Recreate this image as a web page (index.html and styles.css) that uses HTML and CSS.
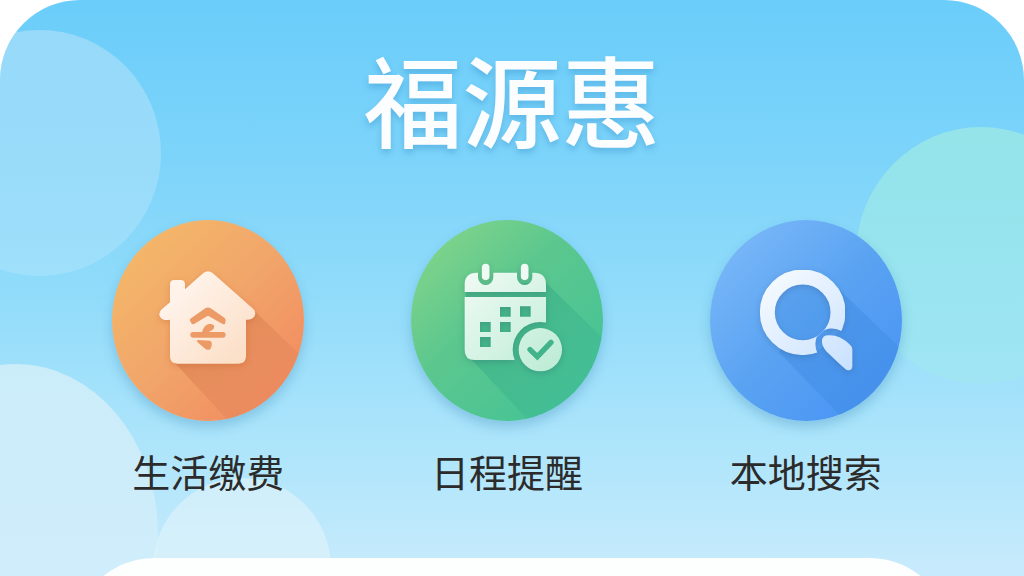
FILE: index.html
```html
<!DOCTYPE html>
<html lang="zh-CN">
<head>
    <meta charset="UTF-8">
    <meta name="viewport" content="width=device-width, initial-scale=1.0">
    <title>福源惠</title>
    <link rel="stylesheet" href="styles.css">
</head>
<body>
    <main class="hero">
        <div class="bubble bubble-top"></div>
        <div class="bubble bubble-green"></div>
        <div class="bubble bubble-left"></div>
        <div class="bubble bubble-small"></div>

        <h1 class="title">福源惠</h1>

        <nav class="menu">
            <a class="item" href="#pay">
                <span class="disc disc-orange">
                    <svg viewBox="38 45 576 603" aria-hidden="true">
                        <defs>
                            <linearGradient id="cream" x1="0" y1="0" x2="1" y2="1">
                                <stop offset="0.2" stop-color="#fff3ea"/>
                                <stop offset="1" stop-color="#fbdcc2"/>
                            </linearGradient>
                            <linearGradient id="shade-orange" gradientUnits="userSpaceOnUse" x1="330" y1="400" x2="500" y2="570">
                                <stop offset="0" stop-color="#d97f50" stop-opacity="0.6"/>
                                <stop offset="1" stop-color="#e0845a" stop-opacity="0.35"/>
                            </linearGradient>
                        </defs>
                        <path fill="url(#shade-orange)" d="M466 318L660 506V680H418L226 473Z"/>
                        <g class="glyph">
                            <path fill="url(#cream)" d="M212 292V238Q212 225 225 225H244Q257 225 257 238V253L312 204Q326 193 340 204L462 312Q471 321 466 333Q460 345 440 344V454Q440 476 418 476H234Q212 476 212 454V344Q190 349 182 335Q176 323 187 313Z"/>
                        </g>
                        <g fill="#ec9a66">
                            <path d="M273 341L318 310Q326 305 334 310L375 338Q380 342 379 348L377 356Q375 359 370 357L326 332L284 357Q279 359 276 355L272 347Q271 343 273 341Z"/>
                            <path d="M281 381H308Q315 359 329 357Q343 355 345 365Q345 373 328 381H370Q379 381 379 389Q379 398 370 398H282Q273 398 273 389Q273 381 281 381Z"/>
                            <path d="M296 405L331 407Q339 409 337 422Q334 437 322 434Q318 433 295 412Q290 405 296 405Z"/>
                        </g>
                    </svg>
                </span>
                <span class="label">生活缴费</span>
            </a>

            <a class="item" href="#schedule">
                <span class="disc disc-green">
                    <svg viewBox="34 45 576 603" aria-hidden="true">
                        <defs>
                            <linearGradient id="mint" gradientUnits="userSpaceOnUse" x1="200" y1="190" x2="470" y2="490">
                                <stop offset="0" stop-color="#f1fbf5"/>
                                <stop offset="1" stop-color="#bdecd5"/>
                            </linearGradient>
                            <linearGradient id="shade-green" gradientUnits="userSpaceOnUse" x1="330" y1="360" x2="520" y2="550">
                                <stop offset="0" stop-color="#36ad86" stop-opacity="0.55"/>
                                <stop offset="1" stop-color="#3cb493" stop-opacity="0.35"/>
                            </linearGradient>
                            <mask id="calendar-cut">
                                <rect x="150" y="150" width="400" height="400" fill="#fff"/>
                                <path stroke="#000" stroke-width="46" stroke-linecap="round" d="M258 180V217M375 180V217"/>
                                <circle cx="422" cy="434" r="83" fill="#000"/>
                                <path d="M301 306h32v29h-32zM361 304h32v31h-32zM241 351h32v30h-32zM301 351h32v30h-32zM241 396h32v30h-32z" fill="#000"/>
                            </mask>
                        </defs>
                        <path fill="url(#shade-green)" d="M438 232L660 449V680H418L214 462L198 440V240Z"/>
                        <g class="glyph" fill="url(#mint)">
                            <g mask="url(#calendar-cut)">
                                <path d="M195 261V239Q195 203 231 203H403Q439 203 439 239V261Z"/>
                                <path d="M195 276H439V465H225Q195 465 195 435Z"/>
                            </g>
                            <path stroke="#effaf4" stroke-width="23" stroke-linecap="round" d="M258 188V214M375 188V214"/>
                            <circle cx="422" cy="434" r="65"/>
                        </g>
                        <path fill="none" stroke="#42b48c" stroke-width="16" stroke-linecap="round" stroke-linejoin="miter" d="M391 434L413 455L454 412"/>
                    </svg>
                </span>
                <span class="label">日程提醒</span>
            </a>

            <a class="item" href="#search">
                <span class="disc disc-blue">
                    <svg viewBox="34 45 576 603" aria-hidden="true">
                        <defs>
                            <linearGradient id="ice" gradientUnits="userSpaceOnUse" x1="200" y1="200" x2="460" y2="490">
                                <stop offset="0" stop-color="#f7fbff"/>
                                <stop offset="1" stop-color="#c9e1fe"/>
                            </linearGradient>
                            <mask id="ring-cut">
                                <rect x="150" y="150" width="350" height="350" fill="#fff"/>
                                <path fill="#000" d="M378 375Q404 364 432 380L480 410V520H390L357 446Q345 420 354 396Z"/>
                            </mask>
                        </defs>
                        <path fill="#3f8be0" fill-opacity="0.42" d="M424 256L660 483V680H472L240 441L254 428A120 120 0 0 0 419 268Z"/>
                        <circle cx="312" cy="322" r="106" fill="#3f8be0" fill-opacity="0.25"/>
                        <g class="glyph">
                            <circle cx="312" cy="322" r="106" fill="none" stroke="url(#ice)" stroke-width="45" mask="url(#ring-cut)"/>
                            <path fill="url(#ice)" d="M370 405Q372 391 389 391Q423 389 454 419Q461 425 461 433V484Q460 500 443 494Q438 492 382 438Q368 420 370 405Z"/>
                        </g>
                    </svg>
                </span>
                <span class="label">本地搜索</span>
            </a>
        </nav>

        <section class="sheet"></section>
    </main>
</body>
</html>
```
FILE: styles.css
```css
* {
    box-sizing: border-box;
}

body {
    margin: 0;
    background-color: #fff;
    font-family: "Noto Sans CJK SC", "Noto Sans", sans-serif;
}

.hero {
    position: relative;
    display: flex;
    flex-direction: column;
    min-height: 100vh;
    padding-top: 37px;
    overflow: hidden;
    border-radius: 80px 80px 0 0;
    background: linear-gradient(#6acdfa 0%, #7dd4fa 28%, #92dcfa 52%, #aee5fb 78%, #c8ebfc 100%);
}

/* background bubbles */
.bubble {
    position: absolute;
    border-radius: 50%;
}

.bubble-top {
    top: 30px;
    left: -82px;
    width: 243px;
    height: 246px;
    background: linear-gradient(rgba(240, 240, 248, 0.32), rgba(245, 250, 252, 0.16));
}

.bubble-green {
    top: 127px;
    right: -82px;
    width: 250px;
    height: 257px;
    background: linear-gradient(rgba(167, 240, 222, 0.6), rgba(160, 235, 235, 0.4));
}

.bubble-left {
    top: 364px;
    left: -126px;
    width: 284px;
    height: 340px;
    background: linear-gradient(#cbecf9, #d2eefb);
}

.bubble-small {
    top: 478px;
    left: 153px;
    width: 178px;
    height: 180px;
    background: rgba(222, 243, 251, 0.66);
}

.title {
    position: relative;
    margin: 0;
    color: #fcfdff;
    font-size: 99px;
    font-weight: 500;
    line-height: 120px;
    text-align: center;
    text-shadow: 0 4px 6px rgba(40, 130, 190, 0.35);
}

.menu {
    position: relative;
    display: grid;
    grid-template-columns: repeat(3, 1fr);
    margin-top: 63px;
    padding: 0 69px 0 59px;
}

.item {
    display: flex;
    flex-direction: column;
    align-items: center;
    gap: 23px;
    color: #2b2b2b;
    text-decoration: none;
}

.disc {
    width: 192px;
    height: 201px;
    overflow: hidden;
    border-radius: 50%;
    box-shadow: 0 6px 12px rgba(40, 120, 170, 0.28);
}

.disc svg {
    display: block;
    width: 100%;
    height: 100%;
}

.disc-orange {
    background: linear-gradient(135deg, #f4b869 10%, #f1a56a 50%, #f28c60 88%);
}

.disc-green {
    background: linear-gradient(135deg, #80d48a 10%, #5cc78e 42%, #45c396 88%);
}

.disc-blue {
    background: linear-gradient(135deg, #79b7f8 10%, #5aa3f2 50%, #4a95f5 88%);
}

.glyph {
    filter: drop-shadow(0 6px 10px rgba(30, 60, 90, 0.22));
}

.disc-orange .glyph {
    filter: drop-shadow(0 6px 10px rgba(190, 80, 30, 0.3));
}

.label {
    font-size: 38px;
    line-height: 54px;
}

/* negative bottom margin lets the sheet run past the fold */
.sheet {
    position: relative;
    min-height: 160px;
    margin: 60px 74px -142px;
    border-radius: 80px 80px 0 0;
    background-color: #fdfefe;
}
```
